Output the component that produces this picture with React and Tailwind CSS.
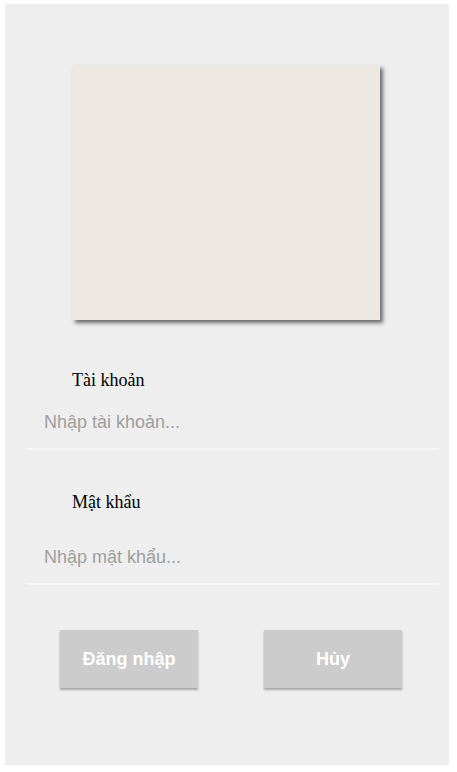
export default function App() {
  return (
    <div className="min-h-screen bg-white pt-[4px] pl-[5px]">
      <div className="w-[444px] h-[761px] bg-[#eeeeee] pt-[61px]">
        {/* picture frame */}
        <div className="ml-[67px] w-[308px] h-[255px] bg-[#ede9e2] shadow-[3px_3px_4px_rgba(0,0,0,0.55)]" />

        {/* account */}
        <label className="block ml-[67px] mt-[50px] text-[18px] leading-[20px] text-black font-['Liberation_Serif',serif]">
          Tài khoản
        </label>
        <input
          type="text"
          placeholder="Nhập tài khoản..."
          className="block ml-[21px] mt-[6px] w-[414px] pt-[16px] pb-[16px] pl-[18px] text-[18px] leading-[20px] bg-transparent outline-none rounded-[3px] border-b-2 border-[#f6f6f6] placeholder:text-[#9e9e9e] font-['Liberation_Sans',Arial,sans-serif]"
        />

        {/* password */}
        <label className="block ml-[67px] mt-[42px] text-[18px] leading-[20px] text-black font-['Liberation_Serif',serif]">
          Mật khẩu
        </label>
        <input
          type="password"
          placeholder="Nhập mật khẩu..."
          className="block ml-[21px] mt-[19px] w-[414px] pt-[16px] pb-[16px] pl-[18px] text-[18px] leading-[20px] bg-transparent outline-none rounded-[3px] border-b-2 border-[#f6f6f6] placeholder:text-[#9e9e9e] font-['Liberation_Sans',Arial,sans-serif]"
        />

        {/* actions */}
        <div className="flex gap-[66px] ml-[55px] mt-[45px]">
          <button className="w-[138px] h-[58px] bg-[#cccccc] text-white text-[18px] font-bold shadow-[0_2px_2px_rgba(0,0,0,0.3)] font-['Liberation_Sans',Arial,sans-serif]">
            Đăng nhập
          </button>
          <button className="w-[138px] h-[58px] bg-[#cccccc] text-white text-[18px] font-bold shadow-[0_2px_2px_rgba(0,0,0,0.3)] font-['Liberation_Sans',Arial,sans-serif]">
            Hủy
          </button>
        </div>
      </div>
    </div>
  );
}
